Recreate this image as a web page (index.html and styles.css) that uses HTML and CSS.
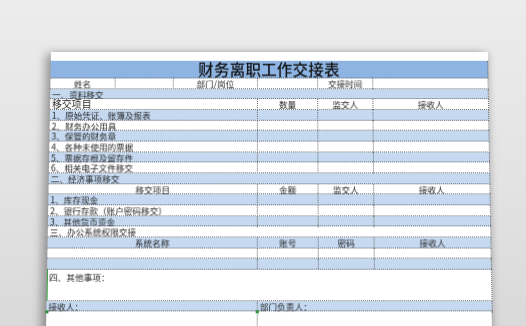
FILE: index.html
```html
<!DOCTYPE html>
<html lang="zh">
<head>
<meta charset="utf-8">
<title>财务离职工作交接表</title>
<link rel="stylesheet" href="styles.css">
</head>
<body>
<div class="paper">
  <div class="sheet">
    <div class="row title">财务离职工作交接表</div>

    <div class="row grid">
      <div class="c center">姓名</div><div class="c"></div><div class="c center">部门/岗位</div><div class="c"></div><div class="c center">交接时间</div><div class="c"></div>
    </div>
    <div class="row blue section">一、资料移交</div>
    <div class="row grid">
      <div class="c span3 big">移交项目</div><div class="c center">数量</div><div class="c center">监交人</div><div class="c center">接收人</div>
    </div>
    <div class="row grid blue"><div class="c span3">1、原始凭证、账簿及报表</div><div class="c"></div><div class="c"></div><div class="c"></div></div>
    <div class="row grid"><div class="c span3">2、财务办公用具</div><div class="c"></div><div class="c"></div><div class="c"></div></div>
    <div class="row grid blue"><div class="c span3">3、保管的财务章</div><div class="c"></div><div class="c"></div><div class="c"></div></div>
    <div class="row grid"><div class="c span3">4、各种未使用的票据</div><div class="c"></div><div class="c"></div><div class="c"></div></div>
    <div class="row grid blue"><div class="c span3">5、票据存根及留存件</div><div class="c"></div><div class="c"></div><div class="c"></div></div>
    <div class="row grid"><div class="c span3">6、相关电子文件移交</div><div class="c"></div><div class="c"></div><div class="c"></div></div>

    <div class="row blue section">二、经济事项移交</div>
    <div class="row grid">
      <div class="c span3 center">移交项目</div><div class="c center">金额</div><div class="c center">监交人</div><div class="c center">接收人</div>
    </div>
    <div class="row grid blue"><div class="c span3">1、库存现金</div><div class="c"></div><div class="c"></div><div class="c"></div></div>
    <div class="row grid"><div class="c span3">2、银行存款（账户密码移交）</div><div class="c"></div><div class="c"></div><div class="c"></div></div>
    <div class="row grid blue"><div class="c span3">3、其他货币资金</div><div class="c"></div><div class="c"></div><div class="c"></div></div>

    <div class="row section">三、办公系统权限交接</div>
    <div class="row grid blue">
      <div class="c span3 center">系统名称</div><div class="c center">账号</div><div class="c center">密码</div><div class="c center">接收人</div>
    </div>
    <div class="row grid"><div class="c span3"></div><div class="c"></div><div class="c"></div><div class="c"></div></div>
    <div class="row grid blue"><div class="c span3"></div><div class="c"></div><div class="c"></div><div class="c"></div></div>

    <div class="row section other">四、其他事项：</div>
    <div class="row grid blue sign">
      <div class="c span3">接收人：</div><div class="c span3">部门负责人：</div>
    </div>
    <div class="row grid tail"><div class="c span3"></div><div class="c span3"></div></div>
  </div>
</div>
</body>
</html>
```

FILE: styles.css
```css
html, body {
  margin: 0;
  height: 100%;
}

body {
  overflow: hidden;
  background: linear-gradient(180deg, #ececec 0%, #e3e3e3 55%, #d9d9d9 100%);
  font-family: "Noto Sans CJK SC", "Noto Sans", sans-serif;
  color: #1e1e1e;
}

.paper {
  margin: 52px 0 0 51px;
  width: 437px;
  height: 288px;
  padding-top: 9px;
  box-sizing: border-box;
  background: #ffffff;
  box-shadow: -5px 2px 9px rgba(0, 0, 0, 0.35), 2px 0 6px rgba(0, 0, 0, 0.12);
  transform-origin: 50% 0;
  transform: perspective(1000px) rotateX(4.7deg) scaleY(0.98);
}

.sheet {
  display: flex;
  flex-direction: column;
}

.row {
  height: 10.667px;
  box-sizing: border-box;
  border-bottom: 1px dotted #6c6c6c;
  border-right: 1px dotted #6c6c6c;
  font-size: 8.5px;
  line-height: 11px;
  white-space: nowrap;
}

.grid {
  display: grid;
  grid-template-columns: 65px 58px 84px 60px 55px 115px;
  border-right: none;
}

.c {
  border-right: 1px dotted #6c6c6c;
  padding-left: 2px;
  min-width: 0;
}

.center {
  text-align: center;
  padding-left: 0;
}

.span3 {
  grid-column: span 3;
}

.big {
  font-size: 9.8px;
  line-height: 10px;
}

.blue {
  background: #c5d9f1;
}

.section {
  padding-left: 2px;
}

.title {
  height: 18px;
  background: #8db4e2;
  font-size: 15.5px;
  line-height: 17px;
  font-weight: 500;
  text-align: center;
  letter-spacing: 0.2px;
  color: #111;
}

.other {
  height: 31px;
  line-height: 12px;
  padding-top: 1px;
  border-left: 1.5px solid #3aa34a;
  padding-left: 1px;
}

.sign {
  position: relative;
}

.sign::before,
.sign::after {
  content: "";
  position: absolute;
  width: 3px;
  height: 3px;
  background: #2f8f3c;
}

.sign::before {
  left: -1px;
  top: 9px;
}

.sign::after {
  left: 205px;
  top: 9px;
}

.tail {
  height: 30px;
  border-bottom: none;
}
```
